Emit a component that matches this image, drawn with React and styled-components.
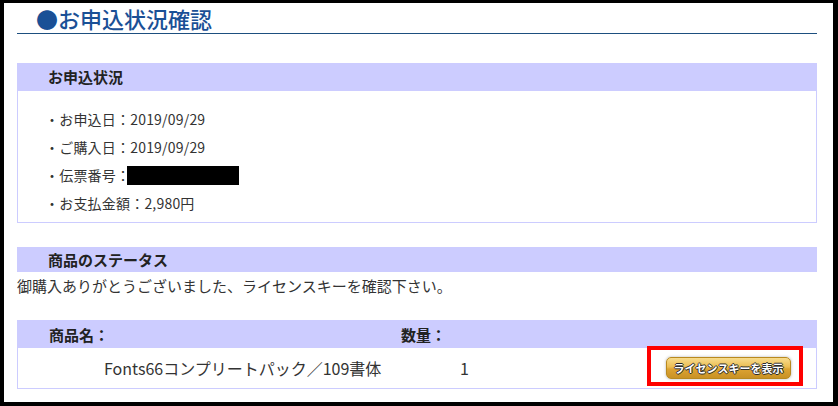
import React from "react";
import styled, { createGlobalStyle } from "styled-components";

const GlobalStyle = createGlobalStyle`
  html, body {
    margin: 0;
    padding: 0;
    background: #000;
  }
  body {
    font-family: "Noto Sans CJK JP", "Noto Sans", sans-serif;
    color: #333;
  }
`;

const Page = styled.div`
  position: relative;
  box-sizing: border-box;
  margin: 3px 5px 0 4px;
  height: 399px;
  background: #fff;
  padding: 0 16px 0 13px;
  overflow: hidden;
`;

const Title = styled.h1`
  margin: 0;
  padding-left: 19px;
  font-size: 22px;
  line-height: 30px;
  font-weight: 500;
  color: #1a5096;
  border-bottom: 1px solid #1d4f7f;
`;

const Section = styled.section`
  margin-top: ${(p) => p.$top}px;
`;

const Header = styled.div`
  height: ${(p) => p.$h}px;
  background: #ccccff;
  padding-left: 31px;
  font-size: 15px;
  font-weight: bold;
  line-height: ${(p) => p.$h}px;
  color: #222;
`;

const Body = styled.div`
  border: 1px solid #ccccff;
  border-top: none;
  padding: 14px 0 5px 27px;
`;

const Item = styled.div`
  display: flex;
  align-items: center;
  height: 28px;
  font-size: 14px;
  letter-spacing: 0.2px;
`;

const Redacted = styled.span`
  display: inline-block;
  width: 112px;
  height: 19px;
  margin-left: -3px;
  background: #000;
`;

const Message = styled.p`
  margin: 2px 0 0;
  font-size: 15px;
  line-height: 23px;
  color: #333;
`;

const Table = styled.div`
  margin-top: 23px;
  border: 1px solid #ccccff;
  border-top: none;
`;

const Row = styled.div`
  display: grid;
  grid-template-columns: ${(p) => p.$cols};
  align-items: center;
  height: ${(p) => p.$h}px;
  background: ${(p) => (p.$head ? "#ccccff" : "#fff")};
  font-size: ${(p) => (p.$head ? 15 : 16)}px;
  font-weight: ${(p) => (p.$head ? "bold" : "normal")};
  color: ${(p) => (p.$head ? "#222" : "#333")};
`;

const Cell = styled.div`
  display: flex;
  align-items: center;
  padding-left: ${(p) => p.$pad || 0}px;
`;

const KeyButton = styled.button`
  width: 125px;
  height: 22px;
  padding: 0;
  border: 1px solid #b8891f;
  border-radius: 5px;
  background: linear-gradient(#f7dc8e 0%, #ecbd52 45%, #dca332 55%, #c99225 100%);
  box-shadow: 0 0 3px rgba(0, 0, 0, 0.3);
  font-family: "Noto Sans CJK JP", sans-serif;
  font-size: 11px;
  font-weight: bold;
  color: #fff;
  text-shadow: -1px 0 0 #2a2a2a, 1px 0 0 #2a2a2a, 0 -1px 0 #2a2a2a, 0 1px 0 #2a2a2a;
  cursor: pointer;
`;

const Highlight = styled.div`
  position: absolute;
  left: 643px;
  top: 343px;
  width: 156px;
  height: 40px;
  box-sizing: border-box;
  border: 4px solid #ff0000;
  pointer-events: none;
`;

const info = [
  "・お申込日：2019/09/29",
  "・ご購入日：2019/09/29",
  null,
  "・お支払金額：2,980円",
];

const cols = "86px 297px 265px 1fr";

export default function App() {
  return (
    <>
      <GlobalStyle />
      <Page>
        <Title>●お申込状況確認</Title>

        <Section $top={29}>
          <Header $h={28}>お申込状況</Header>
          <Body>
            {info.map((t, i) =>
              t ? (
                <Item key={i}>{t}</Item>
              ) : (
                <Item key={i}>
                  ・伝票番号：<Redacted />
                </Item>
              )
            )}
          </Body>
        </Section>

        <Section $top={24}>
          <Header $h={25}>商品のステータス</Header>
          <Message>御購入ありがとうございました、ライセンスキーを確認下さい。</Message>
          <Table>
            <Row $head $h={28} $cols="383px 1fr">
              <Cell $pad={31}>商品名：</Cell>
              <Cell>数量：</Cell>
            </Row>
            <Row $h={40} $cols={cols}>
              <Cell />
              <Cell>Fonts66コンプリートパック／109書体</Cell>
              <Cell $pad={59}>1</Cell>
              <Cell>
                <KeyButton>ライセンスキーを表示</KeyButton>
              </Cell>
            </Row>
          </Table>
        </Section>

        <Highlight />
      </Page>
    </>
  );
}
